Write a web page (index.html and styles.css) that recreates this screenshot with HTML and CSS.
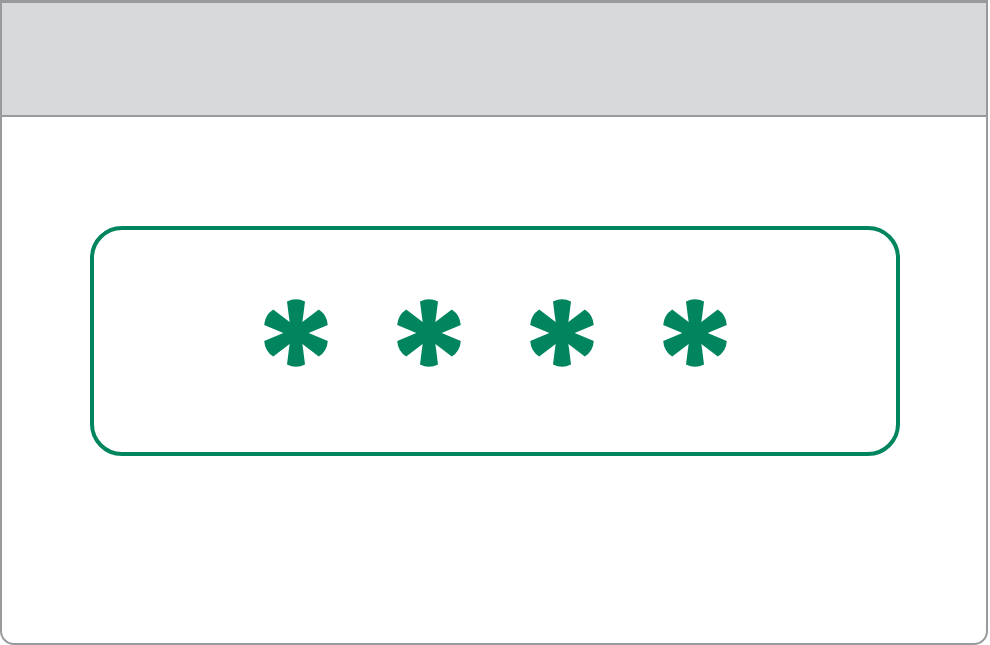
FILE: index.html
```html
<!DOCTYPE html>
<html lang="en">
<head>
  <meta charset="UTF-8" />
  <title>PIN Field</title>
  <link rel="stylesheet" href="styles.css">
</head>
<body>
  <div class="window">
    <div class="titlebar"></div>
    <div class="content">
      <div class="pin-box">
        <svg class="star" viewBox="-36 -36 72 72"><use href="#ast"/></svg>
        <svg class="star" viewBox="-36 -36 72 72"><use href="#ast"/></svg>
        <svg class="star" viewBox="-36 -36 72 72"><use href="#ast"/></svg>
        <svg class="star" viewBox="-36 -36 72 72"><use href="#ast"/></svg>
      </div>
    </div>
  </div>

  <svg width="0" height="0" class="defs">
    <defs>
      <path id="arm" d="M-5,0 L-9,-31.5 Q0,-36 9,-31.5 L5,0 Z"/>
      <g id="ast" fill="#00855f">
        <use href="#arm"/>
        <use href="#arm" transform="rotate(60)"/>
        <use href="#arm" transform="rotate(120)"/>
        <use href="#arm" transform="rotate(180)"/>
        <use href="#arm" transform="rotate(240)"/>
        <use href="#arm" transform="rotate(300)"/>
        <circle r="7"/>
      </g>
    </defs>
  </svg>
</body>
</html>
```

FILE: styles.css
```css
body {
  margin: 0;
  padding: 0;
  background: #ffffff;
  font-family: 'Liberation Sans', sans-serif;
}
.window {
  width: 984px;
  height: 640px;
  border: 2px solid #999a9b;
  border-top-width: 3px;
  border-radius: 0 0 14px 14px;
  display: flex;
  flex-direction: column;
  overflow: hidden;
}
.titlebar {
  height: 112px;
  background: #d8d9db;
  border-bottom: 2px solid #999a9b;
}
.content {
  flex: 1;
  padding-top: 109px;
  padding-left: 88px;
}
.pin-box {
  width: 810px;
  height: 230px;
  border: 4px solid #00855f;
  border-radius: 32px;
  display: flex;
  align-items: flex-start;
  justify-content: center;
  gap: 61px;
  padding-top: 67px;
  box-sizing: border-box;
}
.star {
  width: 72px;
  height: 72px;
}
.defs {
  position: absolute;
}
```
